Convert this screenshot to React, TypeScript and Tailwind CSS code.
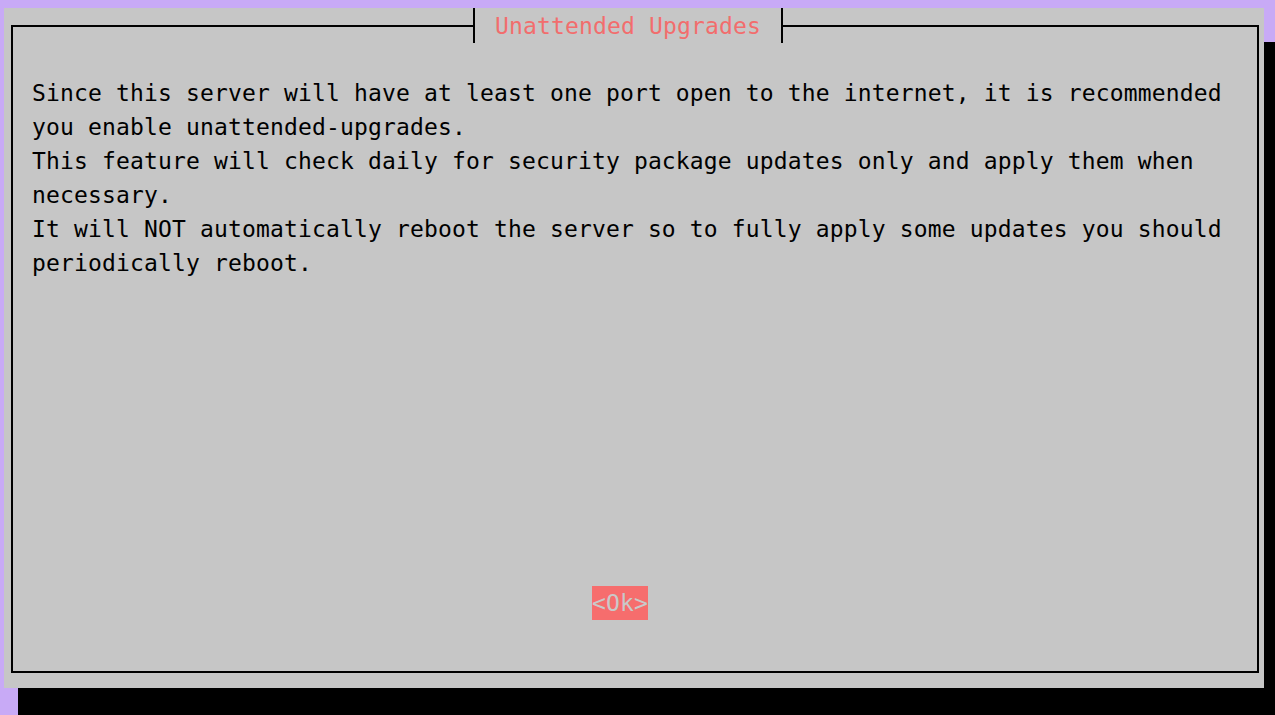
const lines = [
  "Since this server will have at least one port open to the internet, it is recommended",
  "you enable unattended-upgrades.",
  "This feature will check daily for security package updates only and apply them when",
  "necessary.",
  "It will NOT automatically reboot the server so to fully apply some updates you should",
  "periodically reboot.",
];

export default function App() {
  return (
    <div
      className="h-[715px] w-[1275px] overflow-hidden bg-[#c8aaf6] pl-[4px] pt-[8px] text-[23px] tracking-[0.15px] text-black"
      style={{ fontFamily: '"DejaVu Sans Mono", "Liberation Mono", monospace' }}
    >
      {/* dialog with terminal drop shadow */}
      <div className="flex h-[680px] w-[1260px] bg-[#c6c6c6] pb-[15px] pl-[7px] pr-[5px] pt-[17px] shadow-[14px_34px_0_0_#000]">
        <div className="relative flex flex-1 flex-col border-2 border-black">
          {/* title over the top border */}
          <div className="absolute left-[460px] top-[-19px] flex h-[35px] w-[310px]">
            <div className="w-[2px] bg-black" />
            <div className="flex flex-1 items-center justify-center bg-[#c6c6c6] leading-[34px] text-[#f26d6d]">
              Unattended Upgrades
            </div>
            <div className="w-[2px] bg-black" />
          </div>

          <div className="pl-[19px] pt-[49px]">
            {lines.map((line) => (
              <div key={line} className="h-[34px] whitespace-pre leading-[34px]">
                {line}
              </div>
            ))}
          </div>

          <div className="mb-[51px] ml-[579px] mt-auto flex h-[34px] w-[56px] items-center justify-center bg-[#f66d6d] leading-[34px] text-[#c9c9c9]">
            &lt;Ok&gt;
          </div>
        </div>
      </div>
    </div>
  );
}
